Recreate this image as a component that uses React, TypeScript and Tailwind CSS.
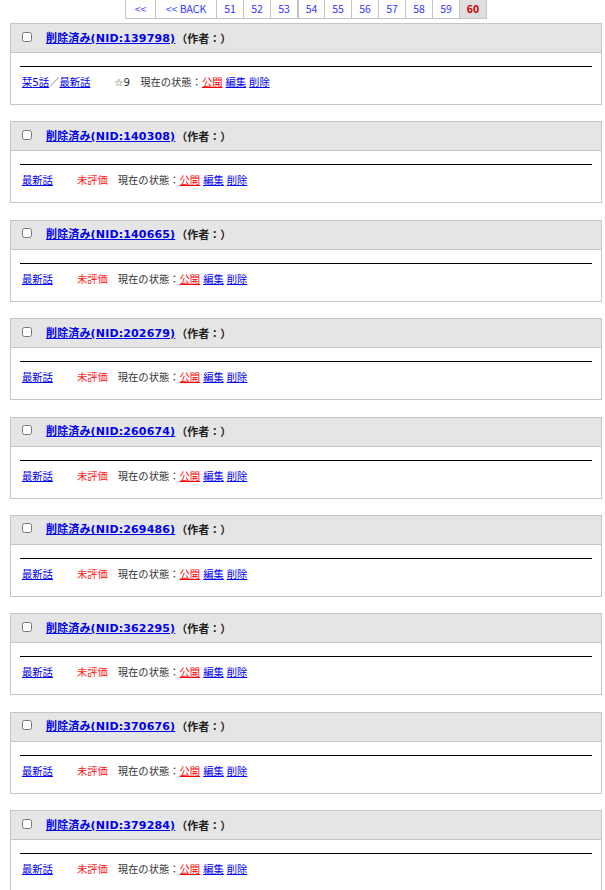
import React from "react";

type Entry = {
  nid: number;
  bookmark?: number;
  stars?: number;
};

const entries: Entry[] = [
  { nid: 139798, bookmark: 5, stars: 9 },
  { nid: 140308 },
  { nid: 140665 },
  { nid: 202679 },
  { nid: 260674 },
  { nid: 269486 },
  { nid: 362295 },
  { nid: 370676 },
  { nid: 379284 },
];

const pages = [51, 52, 53, 54, 55, 56, 57, 58, 59];

const latin = { fontFamily: '"DejaVu Sans", "Noto Sans CJK JP", sans-serif' };
const cjk = { fontFamily: '"Noto Sans CJK JP", "DejaVu Sans", sans-serif' };

function Pager() {
  return (
    <div className="flex pl-[125px] h-[19px] text-[10.5px] leading-[18px]" style={cjk}>
      <a className="w-[31px] border-x border-b border-[#c4c4c4] text-center text-[#3535ff]">&lt;&lt;</a>
      <a className="w-[61px] border-r border-b border-[#c4c4c4] text-center text-[#3535ff]">&lt;&lt; BACK</a>
      {pages.map((p) => (
        <a
          key={p}
          className={
            p === 54
              ? "w-[27px] border-x border-b border-[#c4c4c4] text-center text-[#3535ff]"
              : "w-[27px] border-r border-b border-[#c4c4c4] text-center text-[#3535ff]"
          }
        >
          {p}
        </a>
      ))}
      <span className="w-[27px] border-r border-b border-[#c4c4c4] bg-[#dedede] text-center font-bold text-[#cc0000]">
        60
      </span>
    </div>
  );
}

function Card({ e }: { e: Entry }) {
  return (
    <div className="w-[592px] ml-[10px] border border-[#c6c6c6] bg-white">
      <div className="h-[29px] bg-[#e5e5e5] border-b border-[#c6c6c6] flex items-center">
        <input type="checkbox" className="ml-[11px] w-[10px] h-[10px] mt-[-3px]" readOnly />
        <a
          className="ml-[14px] text-[11px] font-bold text-[#0000ee] underline leading-none tracking-[0.15px]"
          style={latin}
        >
          削除済み(NID:{e.nid})
        </a>
        <span className="ml-[1px] text-[11px] font-bold text-[#222] leading-none" style={cjk}>
          （作者：）
        </span>
      </div>
      <div className="px-[9px] pt-[13px] pb-[16px]">
        <div className="h-[1px] bg-black" />
        <div
          className="mt-[9px] flex items-center text-[10.3px] leading-[12px] text-[#333] pl-[2px]"
          style={cjk}
        >
          {e.bookmark ? (
            <span>
              <a className="text-[#0000ee] underline">
                栞<span style={latin}>{e.bookmark}</span>話
              </a>
              <span>／</span>
              <a className="text-[#0000ee] underline">最新話</a>
            </span>
          ) : (
            <a className="text-[#0000ee] underline">最新話</a>
          )}
          {e.stars !== undefined ? (
            <span className="ml-[24px]" style={latin}>
              ☆{e.stars}
            </span>
          ) : (
            <span className="ml-[24px] text-[#ff1a1a]">未評価</span>
          )}
          <span className="ml-[10px]">現在の状態：</span>
          <a className="text-[#ff0000] underline">公開</a>
          <a className="ml-[3px] text-[#0000ee] underline">編集</a>
          <a className="ml-[3px] text-[#0000ee] underline">削除</a>
        </div>
      </div>
    </div>
  );
}

export default function App() {
  return (
    <div className="w-[605px] h-[890px] overflow-hidden bg-white">
      <Pager />
      <div className="mt-[4px] flex flex-col gap-[16.375px]">
        {entries.map((e) => (
          <Card key={e.nid} e={e} />
        ))}
      </div>
    </div>
  );
}
